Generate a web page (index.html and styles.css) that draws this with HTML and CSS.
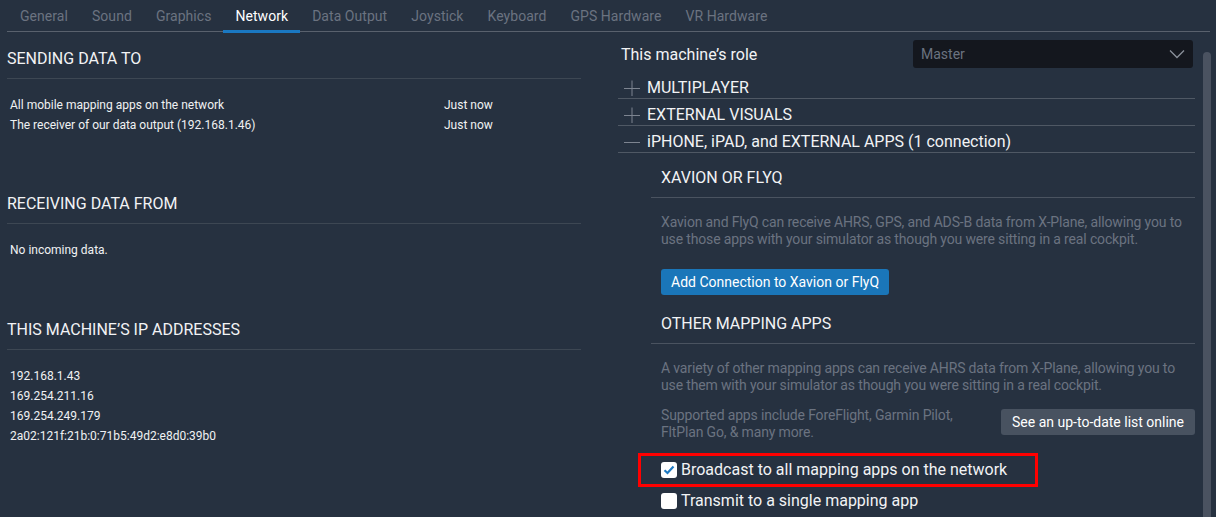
FILE: index.html
```html
<!DOCTYPE html>
<html>
<head>
<meta charset="utf-8">
<link rel="stylesheet" href="styles.css">
</head>
<body>
<nav class="tabs">
  <span class="tab">General</span>
  <span class="tab">Sound</span>
  <span class="tab">Graphics</span>
  <span class="tab active">Network</span>
  <span class="tab">Data Output</span>
  <span class="tab">Joystick</span>
  <span class="tab">Keyboard</span>
  <span class="tab">GPS Hardware</span>
  <span class="tab">VR Hardware</span>
</nav>
<main class="main">
  <section class="left">
    <div class="sect first">
      <h2 class="sect-title">SENDING DATA TO</h2>
      <div class="rows">
        <div class="row"><span class="row-name">All mobile mapping apps on the network</span><span>Just now</span></div>
        <div class="row"><span class="row-name">The receiver of our data output (192.168.1.46)</span><span>Just now</span></div>
      </div>
    </div>
    <div class="sect">
      <h2 class="sect-title">RECEIVING DATA FROM</h2>
      <div class="rows">
        <div class="row">No incoming data.</div>
      </div>
    </div>
    <div class="sect last">
      <h2 class="sect-title">THIS MACHINE’S IP ADDRESSES</h2>
      <div class="rows">
        <div class="row">192.168.1.43</div>
        <div class="row">169.254.211.16</div>
        <div class="row">169.254.249.179</div>
        <div class="row">2a02:121f:21b:0:71b5:49d2:e8d0:39b0</div>
      </div>
    </div>
  </section>
  <section class="right">
    <div class="role">
      <span class="role-label">This machine’s role</span>
      <div class="select">
        <span>Master</span>
        <svg class="chev" width="16" height="10" viewBox="0 0 16 10"><path d="M1 1.5 L8 8.5 L15 1.5" fill="none" stroke="#8a909a" stroke-width="1.3"/></svg>
      </div>
    </div>
    <div class="acc first-acc"><svg class="acc-icon" width="16" height="16" viewBox="0 0 16 16"><path d="M0 8.5 H16 M8 0.5 V16" stroke="#7d8490" stroke-width="1"/></svg>MULTIPLAYER</div>
    <div class="acc"><svg class="acc-icon" width="16" height="16" viewBox="0 0 16 16"><path d="M0 8.5 H16 M8 0.5 V16" stroke="#7d8490" stroke-width="1"/></svg>EXTERNAL VISUALS</div>
    <div class="acc"><svg class="acc-icon" width="16" height="16" viewBox="0 0 16 16"><path d="M0 8.5 H16" stroke="#7d8490" stroke-width="1"/></svg>iPHONE, iPAD, and EXTERNAL APPS (1 connection)</div>
    <div class="panel">
      <h3 class="panel-title">XAVION OR FLYQ</h3>
      <p class="desc">Xavion and FlyQ can receive AHRS, GPS, and ADS-B data from X-Plane, allowing you to use those apps with your simulator as though you were sitting in a real cockpit.</p>
      <button class="btn-blue">Add Connection to Xavion or FlyQ</button>
      <h3 class="panel-title second">OTHER MAPPING APPS</h3>
      <p class="desc">A variety of other mapping apps can receive AHRS data from X-Plane, allowing you to use them with your simulator as though you were sitting in a real cockpit.</p>
      <div class="supported">
        <p class="desc narrow">Supported apps include ForeFlight, Garmin Pilot, FltPlan Go, &amp; many more.</p>
        <button class="btn-grey">See an up-to-date list online</button>
      </div>
      <div class="check-list">
        <div class="highlight">
          <label class="check"><span class="box checked"><svg width="12" height="10" viewBox="0 0 12 10"><path d="M1.5 5.2 L4.5 8 L10.5 1.5" fill="none" stroke="#1f7bc4" stroke-width="2.2"/></svg></span>Broadcast to all mapping apps on the network</label>
        </div>
        <label class="check"><span class="box"></span>Transmit to a single mapping app</label>
      </div>
    </div>
  </section>
  <div class="scrollbar"></div>
</main>
</body>
</html>
```
FILE: styles.css
```css
* { box-sizing: border-box; }
html, body { margin: 0; padding: 0; }
body {
  background: #263140;
  color: #eef0f2;
  font-family: Roboto, "Noto Sans", sans-serif;
  width: 1216px;
  height: 517px;
  overflow: hidden;
}
.tabs {
  display: flex;
  margin: 0 6px 0 7px;
  padding-left: 1px;
  height: 32px;
  border-bottom: 1px solid #59616d;
}
.tab {
  padding: 0 12px;
  font-size: 14px;
  line-height: 33px;
  color: #6b7380;
  letter-spacing: 0.05px;
}
.tab.active {
  color: #ffffff;
  border-bottom: 3px solid #1a78c2;
  margin-bottom: -2px;
  line-height: 32px;
}
.main {
  display: flex;
  align-items: flex-start;
  margin-left: 7px;
}
.left { flex: 0 0 574px; margin-right: 37px; }
.right { flex: 0 0 577px; margin-right: 8px; }

/* left */
.sect { margin-top: 59px; }
.sect.first { margin-top: 17px; }
.sect.last { margin-top: 60px; }
.sect-title {
  margin: 0;
  font-size: 16px;
  font-weight: 400;
  line-height: 20px;
  padding-bottom: 9px;
  border-bottom: 1px solid #3d4753;
  color: #f2f3f5;
}
.rows { margin-top: 16px; padding-left: 3px; }
.row {
  display: flex;
  font-size: 12px;
  line-height: 20px;
  height: 20px;
  color: #f0f1f3;
}
.row-name { width: 434px; }

/* right */
.role {
  display: flex;
  justify-content: space-between;
  align-items: center;
  margin-top: 8px;
  height: 28px;
  padding-left: 3px;
}
.role-label { font-size: 16px; color: #f2f3f5; }
.select {
  width: 280px;
  height: 28px;
  margin-right: 2px;
  background: #14171e;
  border-radius: 3px;
  display: flex;
  align-items: center;
  justify-content: space-between;
  padding: 0 8px 0 8px;
  font-size: 14px;
  color: #6b7380;
}
.acc {
  display: flex;
  align-items: center;
  font-size: 16px;
  font-weight: 400;
  line-height: 20px;
  padding-top: 6px;
  border-bottom: 1px solid #4f5864;
  color: #f2f3f5;
}
.acc.first-acc { margin-top: 4px; }
.acc-icon { margin: 0 7px 0 6px; }
.panel { padding-left: 33px; }
.panel-title {
  margin: 15px 0 0;
  font-size: 16px;
  font-weight: 400;
  line-height: 20px;
  padding: 0 0 9px 10px;
  border-bottom: 1px solid #4a5360;
  color: #f2f3f5;
}
.panel-title.second { margin-top: 19px; }
.desc {
  margin: 16px 0 0;
  padding-left: 10px;
  font-size: 14px;
  line-height: 17px;
  color: #6b7380;
  letter-spacing: -0.15px;
}
.btn-blue {
  margin: 21px 0 0 10px;
  display: block;
  height: 26px;
  padding: 0 10px;
  background: #1a76b9;
  border: none;
  border-radius: 3px;
  color: #ffffff;
  font-family: inherit;
  font-size: 14px;
}
.supported {
  display: flex;
  justify-content: space-between;
  align-items: flex-start;
  margin-top: 13px;
}
.supported .desc { margin-top: 0; width: 320px; }
.btn-grey {
  margin-top: 2px;
  height: 26px;
  padding: 0 11px;
  background: #485260;
  border: none;
  border-radius: 3px;
  color: #ffffff;
  font-family: inherit;
  font-size: 14px;
}
.check-list { margin-top: 12px; }
.highlight {
  display: inline-flex;
  margin-left: -13px;
  padding: 4px 28px 4px 20px;
  border: 3px solid #ff0000;
}
.check {
  display: flex;
  align-items: center;
  gap: 4px;
  font-size: 16px;
  line-height: 20px;
  color: #f2f3f5;
  padding-left: 10px;
}
.highlight .check { padding-left: 0; }
.check-list > .check { margin-top: 4px; }
.box {
  width: 16px;
  height: 16px;
  border-radius: 3px;
  background: #ffffff;
  display: inline-flex;
  align-items: center;
  justify-content: center;
}
.scrollbar {
  flex: 0 0 8px;
  margin-top: 20px;
  height: 480px;
  background: #4a5260;
  border-radius: 4px 4px 0 0;
}
```
